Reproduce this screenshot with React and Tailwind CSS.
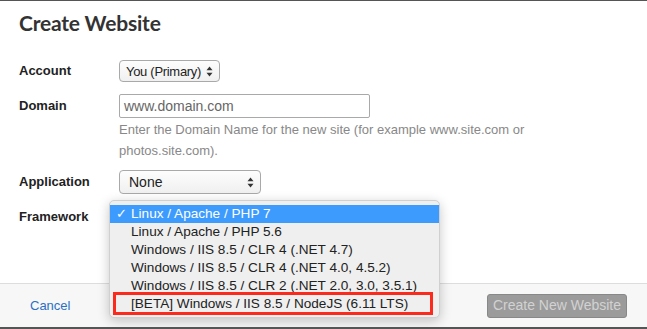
import React from "react";

const Arrows = () => (
  <svg width="7" height="11" viewBox="0 0 7 11" className="shrink-0">
    <path d="M3.5 0.5 L6.5 4.3 L0.5 4.3 Z" fill="#333" />
    <path d="M3.5 10.5 L6.5 6.7 L0.5 6.7 Z" fill="#333" />
  </svg>
);

const Select = ({ value, width, pad = "pl-[9px]" }) => (
  <div
    className={`${width} ${pad} h-full flex items-center justify-between pr-[6px] rounded-[4px] border border-[#a9a9a9] bg-gradient-to-b from-[#fdfdfd] to-[#f0f0f0] text-[14px] text-[#222] whitespace-nowrap`}
  >
    <span>{value}</span>
    <Arrows />
  </div>
);

const options = [
  "Linux / Apache / PHP 5.6",
  "Windows / IIS 8.5 / CLR 4 (.NET 4.7)",
  "Windows / IIS 8.5 / CLR 4 (.NET 4.0, 4.5.2)",
  "Windows / IIS 8.5 / CLR 2 (.NET 2.0, 3.0, 3.5.1)",
];

export default function App() {
  return (
    <div className="relative w-[647px] h-[329px] flex flex-col bg-white border-t border-b-2 border-[#555] font-['Liberation_Sans',Arial,sans-serif] overflow-hidden">
      <div className="flex-1 px-[19px] pt-[10px]">
        <h1 className="text-[21px] leading-6 font-bold text-[#333] font-['Lato',sans-serif] tracking-[-0.2px]">
          Create Website
        </h1>

        <div className="mt-[25px] flex items-center h-[22px]">
          <label className="w-[100px] text-[13px] font-bold text-[#222]">Account</label>
          <Select value={<span className="text-[13px] tracking-[-0.3px]">You (Primary)</span>} width="w-[101px]" pad="pl-[6px]" />
        </div>

        <div className="mt-[12px] flex items-center h-[24px]">
          <label className="w-[100px] text-[13px] font-bold text-[#222]">Domain</label>
          <div className="w-[251px] h-full flex items-center px-[4px] border border-[#a9a9a9] rounded-[2px] text-[14px] text-[#666]">
            www.domain.com
          </div>
        </div>
        <p className="ml-[100px] pt-px text-[13px] leading-[21px] text-[#888]">
          Enter the Domain Name for the new site (for example www.site.com or
          <br />
          photos.site.com).
        </p>

        <div className="mt-[9px] flex items-center h-[24px]">
          <label className="w-[100px] text-[13px] font-bold text-[#222]">Application</label>
          <Select value="None" width="w-[142px]" />
        </div>

        <div className="mt-[11px] flex items-center h-[24px]">
          <label className="w-[100px] text-[13px] font-bold text-[#222]">Framework</label>
          <Select value="" width="w-[250px]" />
        </div>
      </div>

      <div className="h-[44px] flex items-center justify-between pl-[30px] pr-[20px] border-t border-[#ddd] bg-[#f7f7f7]">
        <a className="text-[13px] text-[#2c6fc4]">Cancel</a>
        <button className="w-[140px] h-[24px] rounded-[3px] border border-[#888] bg-[#9b9b9b] text-[14px] text-[#d2d2d2]">
          Create New Website
        </button>
      </div>

      <div className="absolute left-[109px] top-[199px] w-[331px] py-[4px] rounded-[5px] bg-[#efefef] border border-[#d0d0d0] shadow-[0_3px_12px_rgba(0,0,0,0.22)] text-[13.6px] text-[#222]">
        <div className="h-[18px] flex items-center bg-[#3d9bfd] text-white">
          <span className="w-[21px] pl-[6px] text-[13px]">✓</span>
          <span>Linux / Apache / PHP 7</span>
        </div>
        {options.map((o) => (
          <div key={o} className="h-[18px] flex items-center pl-[21px]">
            {o}
          </div>
        ))}
        <div className="relative h-[18px] flex items-center pl-[21px]">
          [BETA] Windows / IIS 8.5 / NodeJS (6.11 LTS)
          <div className="absolute left-[3px] top-[-3px] w-[320px] h-[23px] border-[3px] border-[#fb2a1c]" />
        </div>
      </div>
    </div>
  );
}
